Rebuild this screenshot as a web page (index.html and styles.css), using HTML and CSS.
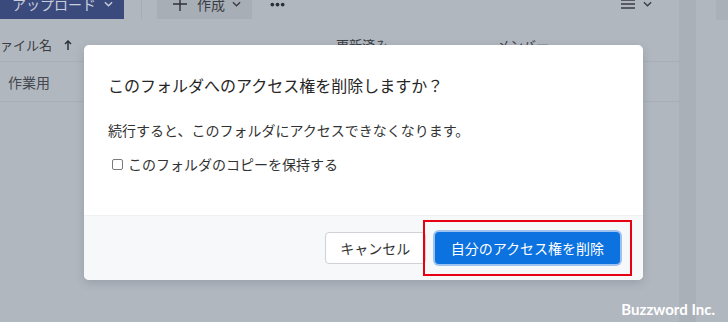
FILE: index.html
```html
<!DOCTYPE html>
<html lang="ja">
<head>
    <meta charset="UTF-8">
    <meta name="viewport" content="width=device-width, initial-scale=1.0">
    <title>フォルダのアクセス権を削除</title>
    <link rel="stylesheet" href="styles.css">
</head>
<body>
    <div class="page">
        <div class="main">
            <div class="toolbar">
                <button class="btn-upload">アップロード
                    <svg class="chev" viewBox="0 0 10 6"><path d="M1 1l4 4 4-4"/></svg>
                </button>
                <span class="divider"></span>
                <button class="btn-create">
                    <svg class="plus" viewBox="0 0 14 14"><path d="M7 0v14M0 7h14"/></svg>
                    作成
                    <svg class="chev" viewBox="0 0 10 6"><path d="M1 1l4 4 4-4"/></svg>
                </button>
                <button class="btn-more">
                    <svg viewBox="0 0 16 5"><circle cx="2.5" cy="2.5" r="2"/><circle cx="8" cy="2.5" r="2"/><circle cx="13.5" cy="2.5" r="2"/></svg>
                </button>
                <span class="spacer"></span>
                <button class="btn-view">
                    <svg class="lines" viewBox="0 0 14 10"><path d="M0 1h14M0 5h14M0 9h14"/></svg>
                    <svg class="chev" viewBox="0 0 10 6"><path d="M1 1l4 4 4-4"/></svg>
                </button>
            </div>
            <div class="list-head">
                <span class="col-name">ファイル名
                    <svg class="arrow" viewBox="0 0 8 10"><path d="M4 10V1M1 4l3-3 3 3"/></svg>
                </span>
                <span>更新済み</span>
                <span>メンバー</span>
            </div>
            <div class="list-row">
                <span class="row-name">作業用</span>
            </div>
        </div>
        <div class="scroll-strip"></div>
        <div class="side"><div class="side-block"></div></div>
    </div>

    <div class="dialog">
        <div class="dialog-body">
            <h2 class="dialog-title">このフォルダへのアクセス権を削除しますか？</h2>
            <p class="dialog-text">続行すると、このフォルダにアクセスできなくなります。</p>
            <label class="keep-copy"><input type="checkbox">このフォルダのコピーを保持する</label>
        </div>
        <div class="dialog-footer">
            <button class="btn-cancel">キャンセル</button>
            <button class="btn-remove">自分のアクセス権を削除</button>
        </div>
    </div>

    <div class="credit">Buzzword Inc.</div>
</body>
</html>
```

FILE: styles.css
```css
body { margin: 0; width: 728px; height: 322px; overflow: hidden; background-color: #b1b7bf; font-family: "Noto Sans CJK JP", "Noto Sans", sans-serif; color: #3a3d43; }
button { font-family: inherit; border: none; background: none; padding: 0; cursor: pointer; }
svg { display: block; }

.page { display: flex; height: 322px; }
.main { width: 679px; }
.scroll-strip { width: 17px; background-color: #aab0b8; }
.side { flex: 1; }
.side-block { width: 12px; height: 20px; margin-left: auto; background-color: #aab0b8; }

.toolbar { display: flex; align-items: center; height: 30px; margin-top: -11px; }
.toolbar .chev { width: 9px; height: 6px; fill: none; stroke: currentColor; stroke-width: 1.5; }
.btn-upload { display: flex; align-items: center; gap: 8px; width: 124px; height: 30px; padding-left: 12px; box-sizing: border-box; background-color: #3b4a7d; color: #c9cedb; font-size: 14px; }
.divider { width: 1px; height: 30px; margin: 0 15px 0 17px; background-color: #a6acb4; }
.btn-create { display: flex; align-items: center; height: 30px; width: 95px; padding-left: 16px; box-sizing: border-box; background-color: #a8aeb6; color: #3a3d43; font-size: 14px; }
.btn-create .plus { width: 14px; height: 14px; margin-right: 10px; fill: none; stroke: #2f3237; stroke-width: 1.4; }
.btn-create .chev { margin-left: 7px; }
.btn-more { margin-left: 18px; width: 15px; }
.btn-more svg { width: 15px; height: 5px; fill: #2d3036; }
.spacer { flex: 1; }
.btn-view { display: flex; align-items: center; gap: 8px; margin-right: 27px; color: #3a3d43; }
.btn-view .lines { width: 14px; height: 10px; fill: none; stroke: #3a3d43; stroke-width: 1.5; }

.list-head { display: grid; grid-template-columns: 349px 161px 1fr; margin-left: -13px; padding: 16px 0 6px; line-height: 20px; font-size: 13px; color: #3a3d43; border-bottom: 1px solid #a8aeb6; }
.col-name { display: flex; align-items: center; gap: 12px; }
.arrow { width: 8px; height: 10px; fill: none; stroke: #2f3237; stroke-width: 1.5; }
.list-row { height: 39px; display: flex; align-items: center; padding-left: 8px; font-size: 14px; color: #45484e; border-bottom: 1px solid #a8aeb6; }

.dialog { position: absolute; left: 84px; top: 45px; width: 559px; height: 235px; display: flex; flex-direction: column; background-color: #fff; border-radius: 5px; box-shadow: 0 3px 10px rgba(60, 66, 80, 0.2); overflow: hidden; }
.dialog-body { flex: 1; padding: 29px 24px 0; }
.dialog-title { margin: 0; font-size: 16px; font-weight: normal; line-height: 22px; color: #262626; }
.dialog-text { margin: 24px 0 0; font-size: 14px; line-height: 20px; color: #333; }
.keep-copy { display: flex; align-items: center; margin-top: 14px; font-size: 14px; line-height: 20px; color: #333; }
.keep-copy input { appearance: none; width: 11px; height: 11px; margin: 0 5px 0 4px; border: 1px solid #7a7a7a; border-radius: 2px; background: #fff; }
.dialog-footer { height: 64px; display: flex; align-items: center; justify-content: flex-end; gap: 9px; padding-right: 23px; background-color: #f7f8fa; border-top: 1px solid #eef0f2; }
.btn-cancel { height: 32px; width: 101px; border: 1px solid #cfd2d6; border-radius: 4px; background-color: #fff; color: #333; font-size: 14px; }
.btn-remove { position: relative; height: 32px; padding: 0 16px; border-radius: 4px; background-color: #0b72e0; color: #fff; font-size: 14px; box-shadow: 0 0 0 2px #9dc2f0; }
.btn-remove::after { content: ""; position: absolute; left: -12px; right: -12px; top: -12px; bottom: -12px; border: 2px solid #e60012; }

.credit { position: absolute; right: 13px; bottom: 4px; color: #fff; font-family: Lato, sans-serif; font-weight: 700; font-size: 15px; }
```
